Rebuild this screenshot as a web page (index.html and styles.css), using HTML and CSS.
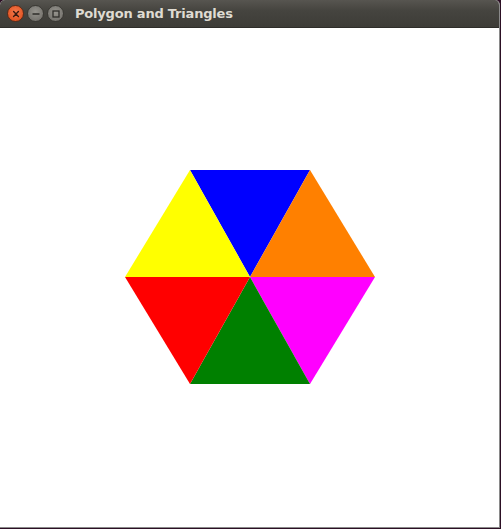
FILE: index.html
```html
<!DOCTYPE html>
<html>
<head>
<meta charset="utf-8">
<link rel="stylesheet" href="styles.css">
</head>
<body>
<div class="window">
  <div class="titlebar">
    <div class="buttons">
      <span class="btn close"><svg width="14" height="14" viewBox="0 0 14 14"><path d="M4.6 4.6 L9.4 9.4 M9.4 4.6 L4.6 9.4" stroke="#3a1a10" stroke-width="1.4" stroke-linecap="round"/></svg></span>
      <span class="btn"><svg width="14" height="14" viewBox="0 0 14 14"><path d="M3.5 7 H10.5" stroke="#2e2d2a" stroke-width="1.6"/></svg></span>
      <span class="btn"><svg width="14" height="14" viewBox="0 0 14 14"><rect x="4" y="4" width="6" height="6" fill="none" stroke="#2e2d2a" stroke-width="1.3"/></svg></span>
    </div>
    <div class="title">Polygon and Triangles</div>
  </div>
  <div class="canvas">
    <svg class="hex" width="500" height="499" viewBox="0 28 500 499">
      <polygon points="190,170 310,170 250,277" fill="#0000ff"/>
      <polygon points="310,170 375,277 250,277" fill="#ff8000"/>
      <polygon points="375,277 310,384 250,277" fill="#ff00ff"/>
      <polygon points="310,384 190,384 250,277" fill="#008000"/>
      <polygon points="190,384 125,277 250,277" fill="#ff0000"/>
      <polygon points="125,277 190,170 250,277" fill="#ffff00"/>
    </svg>
  </div>
</div>
</body>
</html>
```
FILE: styles.css
```css
html, body {
  margin: 0;
  padding: 0;
  background: #2c0f24;
}
.window {
  width: 500px;
  height: 528px;
  display: flex;
  flex-direction: column;
  background: #ffffff;
  border-right: 1px solid #8a8a8a;
  border-bottom: 1px solid #8a8a8a;
  box-sizing: border-box;
  border-radius: 5px 5px 0 0;
  overflow: hidden;
}
.titlebar {
  height: 28px;
  flex: none;
  display: flex;
  align-items: center;
  background: linear-gradient(#575550, #45443f 40%, #3d3c37);
  border-bottom: 1px solid #2e2d29;
  box-sizing: border-box;
}
.buttons {
  display: flex;
  gap: 3px;
  padding-left: 7px;
}
.btn {
  width: 15px;
  height: 15px;
  border-radius: 50%;
  background: radial-gradient(circle at 50% 40%, #96948e, #6b6964);
  border: 1px solid #3a3934;
  display: flex;
  align-items: center;
  justify-content: center;
}
.btn svg { display: block; }
.btn.close {
  background: radial-gradient(circle at 50% 40%, #f4784c, #dd4814);
  border-color: #5a2c1a;
}
.title {
  margin-left: 11px;
  font-family: "DejaVu Sans", sans-serif;
  font-weight: bold;
  font-size: 13px;
  color: #dfdbd2;
  letter-spacing: -0.2px;
}
.canvas {
  flex: 1;
  position: relative;
}
.hex {
  display: block;
}
```
